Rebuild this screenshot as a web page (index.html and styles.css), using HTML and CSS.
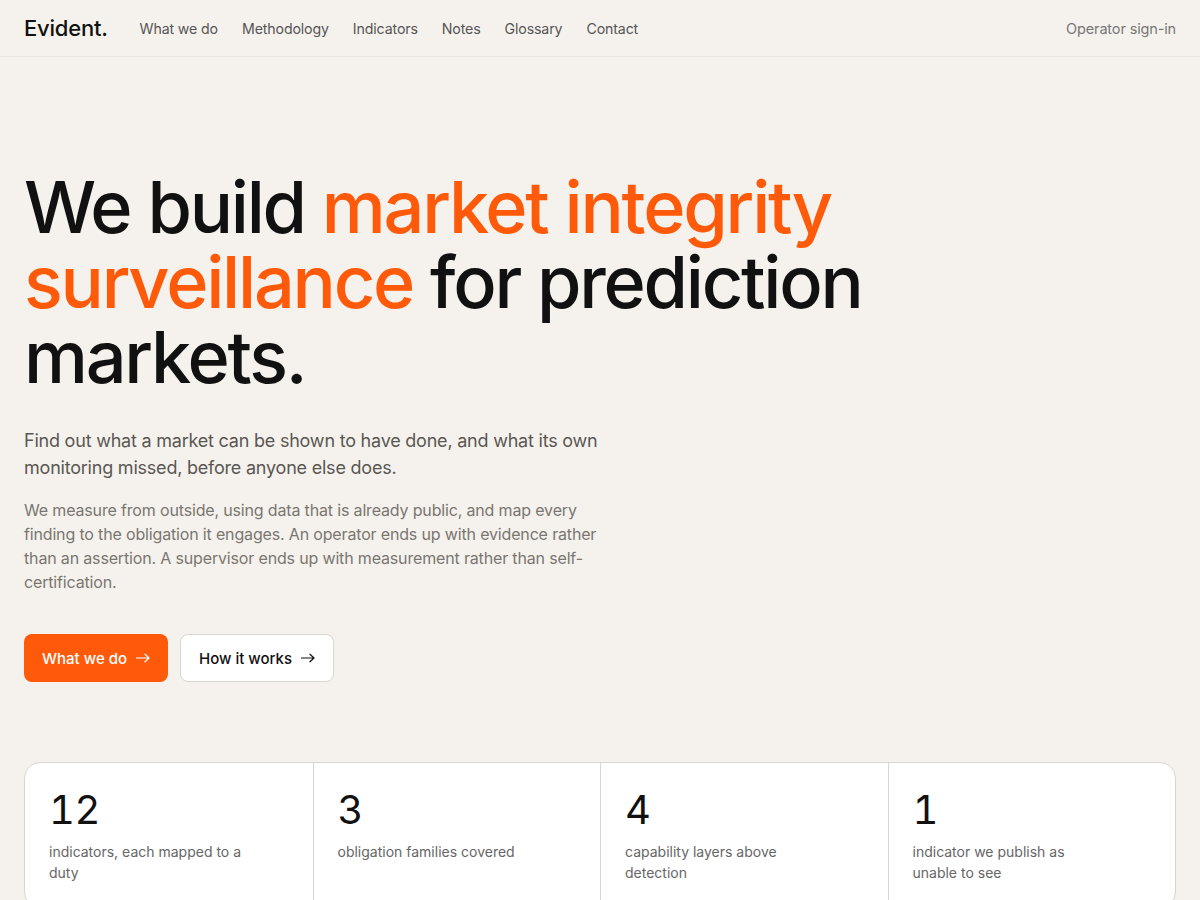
FILE: index.html
```html
<!DOCTYPE html>
<html lang="en">
<head>
<meta charset="utf-8">
<title>Evident.</title>
<link rel="stylesheet" href="styles.css">
</head>
<body>
<header class="topbar">
  <div class="brand">Evident.</div>
  <nav class="nav">
    <a href="#">What we do</a>
    <a href="#">Methodology</a>
    <a href="#">Indicators</a>
    <a href="#">Notes</a>
    <a href="#">Glossary</a>
    <a href="#">Contact</a>
  </nav>
  <a class="signin" href="#">Operator sign-in</a>
</header>
<main class="hero">
  <h1 class="headline">We build <span class="accent">market integrity surveillance</span> for prediction markets.</h1>
  <p class="lead">Find out what a market can be shown to have done, and what its own monitoring missed, before anyone else does.</p>
  <p class="body">We measure from outside, using data that is already public, and map every finding to the obligation it engages. An operator ends up with evidence rather than an assertion. A supervisor ends up with measurement rather than self-certification.</p>
  <div class="actions">
    <a class="btn primary" href="#">What we do <svg class="arrow" viewBox="0 0 14 10" width="14" height="10"><path d="M0.5 5H13M9 1.2L13 5L9 8.8"/></svg></a>
    <a class="btn secondary" href="#">How it works <svg class="arrow" viewBox="0 0 14 10" width="14" height="10"><path d="M0.5 5H13M9 1.2L13 5L9 8.8"/></svg></a>
  </div>
  <section class="stats">
    <div class="stat"><div class="num">12</div><div class="label">indicators, each mapped to a duty</div></div>
    <div class="stat"><div class="num">3</div><div class="label">obligation families covered</div></div>
    <div class="stat"><div class="num">4</div><div class="label">capability layers above detection</div></div>
    <div class="stat"><div class="num">1</div><div class="label">indicator we publish as unable to see</div></div>
  </section>
</main>
</body>
</html>
```
FILE: styles.css
```css
* { box-sizing: border-box; }
html, body { margin: 0; padding: 0; }
body {
  background: #f5f2ed;
  font-family: Inter, "Liberation Sans", sans-serif;
  color: #111;
}
a { text-decoration: none; color: inherit; }
.topbar {
  height: 57px;
  display: flex;
  align-items: center;
  padding: 0 24px;
  border-bottom: 1px solid #e8e4de;
}
.brand {
  font-size: 22px;
  font-weight: 500;
  letter-spacing: -0.01em;
  color: #111;
  margin-right: 32px;
}
.nav { display: flex; gap: 24px; }
.nav a { font-size: 14.2px; color: #555; letter-spacing: -0.01em; }
.signin { margin-left: auto; font-size: 14.5px; color: #777; letter-spacing: -0.01em; }
.hero { padding: 112px 24px 0; }
.headline {
  margin: 0;
  font-size: 72px;
  font-weight: 500;
  line-height: 75px;
  letter-spacing: -0.031em;
  max-width: 900px;
  color: #111;
}
.accent { color: #ff5a0a; }
.lead {
  margin: 33px 0 0;
  max-width: 600px;
  font-size: 18px;
  line-height: 27px;
  letter-spacing: -0.012em;
  color: #5a5753;
}
.body {
  margin: 17px 0 0;
  max-width: 600px;
  font-size: 16px;
  line-height: 24px;
  letter-spacing: -0.01em;
  color: #7a7671;
}
.actions { display: flex; gap: 12px; margin-top: 40px; }
.btn {
  height: 48px;
  display: inline-flex;
  align-items: center;
  gap: 9px;
  padding: 0 18px;
  border-radius: 8px;
  font-size: 15px;
  font-weight: 500;
}
.btn.primary { background: #ff5a0a; color: #fff; }
.btn.secondary { background: #fff; color: #111; border: 1px solid #d9d5cf; }
.arrow { fill: none; stroke: currentColor; stroke-width: 1.2; stroke-linecap: round; stroke-linejoin: round; }
.stats {
  margin-top: 80px;
  display: grid;
  grid-template-columns: repeat(4, 1fr);
  background: #fff;
  border: 1px solid #d9d5cf;
  border-radius: 16px;
}
.stat { padding: 23px 24px 24px; border-left: 1px solid #d9d5cf; min-height: 140px; }
.stat:first-child { border-left: none; }
.num { font-size: 40px; line-height: 48px; letter-spacing: -0.01em; color: #111; font-variant-numeric: tabular-nums; }
.label { margin-top: 7px; font-size: 14px; line-height: 21px; color: #666; max-width: 196px; }
```
